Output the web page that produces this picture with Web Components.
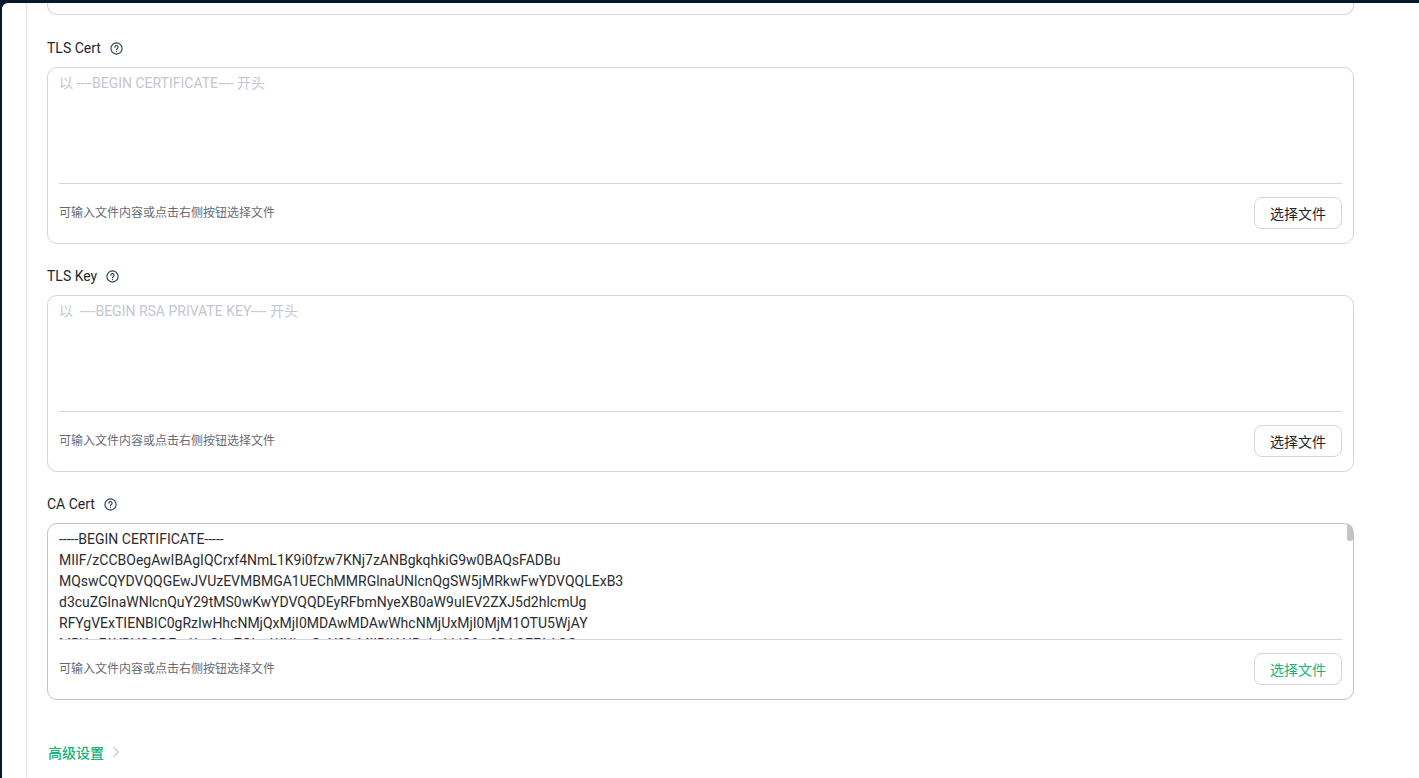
<!DOCTYPE html>
<html lang="zh-CN">
<head>
<meta charset="utf-8">
<title>证书配置</title>
<style>
  html, body { margin: 0; height: 100%; }
  body {
    background: #04192b;
    overflow: hidden;
    font-family: Roboto, "Noto Sans CJK SC", sans-serif;
    padding: 3px 0 0 2px;
    box-sizing: border-box;
  }
</style>
</head>
<body>
<form-panel>
  <file-field label="TLS Cert" placeholder="以 ----BEGIN CERTIFICATE---- 开头"></file-field>
  <file-field label="TLS Key" placeholder="以  ----BEGIN RSA PRIVATE KEY---- 开头"></file-field>
  <file-field label="CA Cert" active>-----BEGIN CERTIFICATE-----
MIIF/zCCBOegAwIBAgIQCrxf4NmL1K9i0fzw7KNj7zANBgkqhkiG9w0BAQsFADBu
MQswCQYDVQQGEwJVUzEVMBMGA1UEChMMRGlnaUNlcnQgSW5jMRkwFwYDVQQLExB3
d3cuZGlnaWNlcnQuY29tMS0wKwYDVQQDEyRFbmNyeXB0aW9uIEV2ZXJ5d2hlcmUg
RFYgVExTIENBIC0gRzIwHhcNMjQxMjI0MDAwMDAwWhcNMjUxMjI0MjM1OTU5WjAY
MRYwFAYDVQQDEw1hcGkuZGlnaWNlcnQuY29tMIIBIjANBgkqhkiG9w0BAQEFAAOC</file-field>
  <advanced-link>高级设置</advanced-link>
</form-panel>

<script>
class FormPanel extends HTMLElement {
  constructor() {
    super();
    this.attachShadow({ mode: "open" });
    this.shadowRoot.innerHTML = `
      <style>
        :host {
          display: block;
          height: 100%;
          background: #fff;
          border-top-left-radius: 6px;
          padding-left: 24px;
          overflow: hidden;
        }
        .column {
          height: 100%;
          width: 1307px;
          padding-left: 20px;
          border-left: 1px solid #e3e3ef;
        }
        .stub {
          height: 11px;
          margin-bottom: 1px;
          border: 1px solid #d3d4de;
          border-top: none;
          border-radius: 0 0 10px 10px;
        }
      </style>
      <div class="column">
        <div class="stub"></div>
        <slot></slot>
      </div>`;
  }
}

class FileField extends HTMLElement {
  constructor() {
    super();
    this.attachShadow({ mode: "open" });
    this.shadowRoot.innerHTML = `
      <style>
        :host {
          display: block;
          padding-top: 21px;
          font-size: 14px;
          color: #24262b;
        }
        .label {
          display: flex;
          align-items: center;
          gap: 9px;
          height: 22px;
          margin-bottom: 8px;
        }
        .label svg { display: block; width: 13px; height: 13px; }
        .box {
          position: relative;
          box-sizing: border-box;
          height: 177px;
          padding: 0 11px;
          display: flex;
          flex-direction: column;
          border: 1px solid #d3d4de;
          border-radius: 10px;
        }
        :host([active]) .box { border-color: #c2c3cb; }
        .content {
          box-sizing: border-box;
          height: 116px;
          padding-top: 5px;
          line-height: 21px;
          white-space: pre;
          overflow: hidden;
          border-bottom: 1px solid #d3d4de;
          color: #2a2c31;
        }
        .placeholder { color: #c3c6d2; }
        .footer {
          flex: 1;
          display: flex;
          justify-content: space-between;
          align-items: flex-start;
          padding-top: 13px;
          font-size: 12px;
          color: #696b73;
        }
        .hint { line-height: 32px; }
        .pick {
          box-sizing: border-box;
          width: 88px;
          height: 32px;
          border: 1px solid #d3d4de;
          border-radius: 8px;
          background: #fff;
          font: inherit;
          font-size: 14px;
          color: #24262b;
          padding: 0;
        }
        :host([active]) .pick { color: #14b47c; }
        .thumb {
          display: none;
          position: absolute;
          top: 0;
          right: 0;
          width: 6px;
          height: 17px;
          background: #c4c4c6;
          border-radius: 0 8px 3px 3px;
        }
        :host([active]) .thumb { display: block; }
      </style>
      <div class="label">
        <span class="name"></span>
        <svg viewBox="0 0 13 13" fill="none" stroke="#2c3a4c">
          <circle cx="6.5" cy="6.5" r="5.6" stroke-width="1.1"/>
          <path d="M4.9 5.2a1.6 1.6 0 1 1 2.5 1.3c-.6.4-.9.7-.9 1.3" stroke-width="1.1" stroke-linecap="round"/>
          <circle cx="6.5" cy="9.6" r=".7" fill="#2c3a4c" stroke="none"/>
        </svg>
      </div>
      <div class="box">
        <div class="content"><span class="placeholder"></span><slot></slot></div>
        <div class="footer">
          <span class="hint">可输入文件内容或点击右侧按钮选择文件</span>
          <button class="pick" type="button">选择文件</button>
        </div>
        <div class="thumb"></div>
      </div>`;
  }

  connectedCallback() {
    this.shadowRoot.querySelector(".name").textContent = this.getAttribute("label");
    this.shadowRoot.querySelector(".placeholder").textContent = this.getAttribute("placeholder") || "";
  }
}

class AdvancedLink extends HTMLElement {
  constructor() {
    super();
    this.attachShadow({ mode: "open" });
    this.shadowRoot.innerHTML = `
      <style>
        :host {
          display: flex;
          align-items: center;
          gap: 8px;
          height: 22px;
          margin: 41px 0 0 1px;
          font-size: 14px;
          font-weight: 500;
          color: #14b47c;
        }
        svg { display: block; width: 8px; height: 12px; }
      </style>
      <slot></slot>
      <svg viewBox="0 0 8 12" fill="none" stroke="#c9cad2" stroke-width="1.2">
        <path d="M1.5 1l5 5-5 5"/>
      </svg>`;
  }
}

customElements.define("form-panel", FormPanel);
customElements.define("file-field", FileField);
customElements.define("advanced-link", AdvancedLink);
</script>
</body>
</html>
